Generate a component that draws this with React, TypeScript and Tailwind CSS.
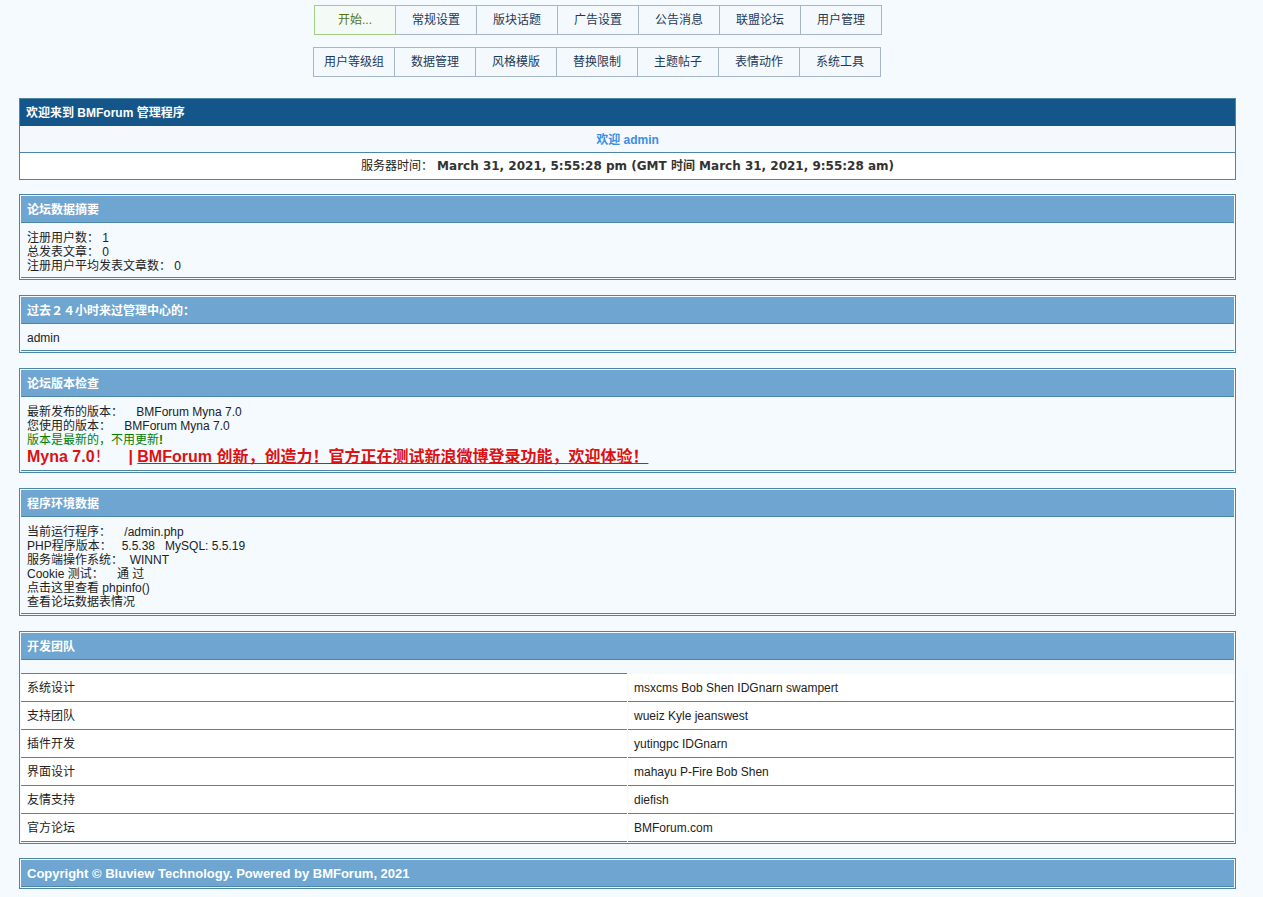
import React from "react";

const navRow1 = ["开始...", "常规设置", "版块话题", "广告设置", "公告消息", "联盟论坛", "用户管理"];
const navRow2 = ["用户等级组", "数据管理", "风格模版", "替换限制", "主题帖子", "表情动作", "系统工具"];

function NavRow({ items, first }: { items: string[]; first?: boolean }) {
  return (
    <div className="flex">
      {items.map((t, i) => {
        const active = first && i === 0;
        return (
          <div
            key={t}
            className={
              active
                ? "relative z-10 w-[82px] h-[30px] flex items-center justify-center border border-[#a6cc84] bg-[#f4faf6] text-[#557515]"
                : "w-[82px] h-[30px] -ml-px flex items-center justify-center border border-[#a4b6c8] bg-[#f4f9fd] text-[#1e3a58]"
            }
          >
            {t}
          </div>
        );
      })}
    </div>
  );
}

function Box({ title, children, noBodyBorder }: { title: string; children?: React.ReactNode; noBodyBorder?: boolean }) {
  return (
    <div className="border border-[#4b86a6] p-px mb-[15px]">
      <div className="h-[27px] bg-[#6ea6d1] border-b border-[#4b86a6] px-[6px] pt-[2px] flex items-center text-white font-bold">
        {title}
      </div>
      {children !== undefined && (
        <div className={noBodyBorder ? "" : "border-b border-[#4b86a6]"}>{children}</div>
      )}
    </div>
  );
}

const team: [string, string][] = [
  ["系统设计", "msxcms Bob Shen IDGnarn swampert"],
  ["支持团队", "wueiz Kyle jeanswest"],
  ["插件开发", "yutingpc IDGnarn"],
  ["界面设计", "mahayu P-Fire Bob Shen"],
  ["友情支持", "diefish"],
  ["官方论坛", "BMForum.com"],
];

export default function App() {
  return (
    <div className="min-h-screen bg-[#f5faff] text-[#222] text-[12px] leading-[14px] font-['Tahoma','Liberation_Sans','Noto_Sans_CJK_SC',sans-serif] pl-[19px] pr-[27px] pt-[5px] pb-[8px]">
      <div className="pl-[295px] flex flex-col gap-[12px]">
        <NavRow items={navRow1} first />
        <NavRow items={navRow2} />
      </div>

      <div className="mt-[21px] border border-[#4b86a6] mb-[14px]">
        <div className="h-[27px] bg-[#15568a] px-[6px] flex items-center text-white font-bold">
          欢迎来到 BMForum 管理程序
        </div>
        <div className="h-[27px] bg-[#f5f9fd] border-b border-[#4b86a6] pt-[2px] flex items-center justify-center font-bold text-[#3a8ee6]">
          欢迎 admin
        </div>
        <div className="h-[26px] bg-white flex items-center justify-center text-[#222]">
          <span>服务器时间：</span>
          <span className="font-bold font-['DejaVu_Sans','Noto_Sans_CJK_SC',sans-serif] text-[#333]">&nbsp;March 31, 2021, 5:55:28 pm (GMT 时间 March 31, 2021, 9:55:28 am)</span>
        </div>
      </div>

      <Box title="论坛数据摘要">
        <div className="px-[6px] pt-[8px] pb-[4px]">
          <div>注册用户数：&nbsp;1</div>
          <div>总发表文章：&nbsp;0</div>
          <div>注册用户平均发表文章数：&nbsp;0</div>
        </div>
      </Box>

      <Box title="过去２４小时来过管理中心的：">
        <div className="px-[6px] pt-[7px] pb-[5px]">admin</div>
      </Box>

      <Box title="论坛版本检查">
        <div className="px-[6px] pt-[8px] pb-[3px]">
          <div>最新发布的版本：&nbsp;&nbsp;&nbsp;&nbsp;BMForum Myna 7.0</div>
          <div>您使用的版本：&nbsp;&nbsp;&nbsp;&nbsp;BMForum Myna 7.0</div>
          <div className="text-[#008000]">版本是最新的，不用更新<b>!</b></div>
          <div className="text-[16px] leading-[20px] text-[#dd1111] font-bold">
            Myna 7.0<span className="font-normal">！</span>&nbsp;&nbsp;&nbsp;&nbsp;|&nbsp;
            <span className="underline">BMForum 创新，创造力！官方正在测试新浪微博登录功能，欢迎体验！</span>
          </div>
        </div>
      </Box>

      <Box title="程序环境数据">
        <div className="px-[6px] pt-[8px] pb-[4px]">
          <div>当前运行程序：&nbsp;&nbsp;&nbsp;&nbsp;/admin.php</div>
          <div>PHP程序版本：&nbsp;&nbsp;&nbsp;5.5.38&nbsp;&nbsp;&nbsp;MySQL: 5.5.19</div>
          <div>服务端操作系统：&nbsp;&nbsp;WINNT</div>
          <div>Cookie 测试：&nbsp;&nbsp;&nbsp;&nbsp;通 过</div>
          <div>点击这里查看 phpinfo()</div>
          <div>查看论坛数据表情况</div>
        </div>
      </Box>

      <Box title="开发团队" noBodyBorder>
        <div className="grid grid-cols-2 gap-x-px">
          <div className="h-[14px] border-b border-[#4b86a6]"></div>
          <div className="h-[14px]"></div>
          {team.map(([a, b]) => (
            <React.Fragment key={a}>
              <div className="h-[28px] bg-white border-b border-[#4b86a6] px-[6px] flex items-center">{a}</div>
              <div className="h-[28px] bg-white border-b border-[#4b86a6] px-[6px] flex items-center">{b}</div>
            </React.Fragment>
          ))}
        </div>
      </Box>

      <div className="border border-[#4b86a6] p-px -mt-px">
        <div className="h-[27px] bg-[#6ea6d1] border-b border-[#4b86a6] px-[6px] pt-[2px] flex items-center text-white font-bold text-[13px]">
          Copyright © Bluview Technology. Powered by BMForum, 2021
        </div>
      </div>
    </div>
  );
}
